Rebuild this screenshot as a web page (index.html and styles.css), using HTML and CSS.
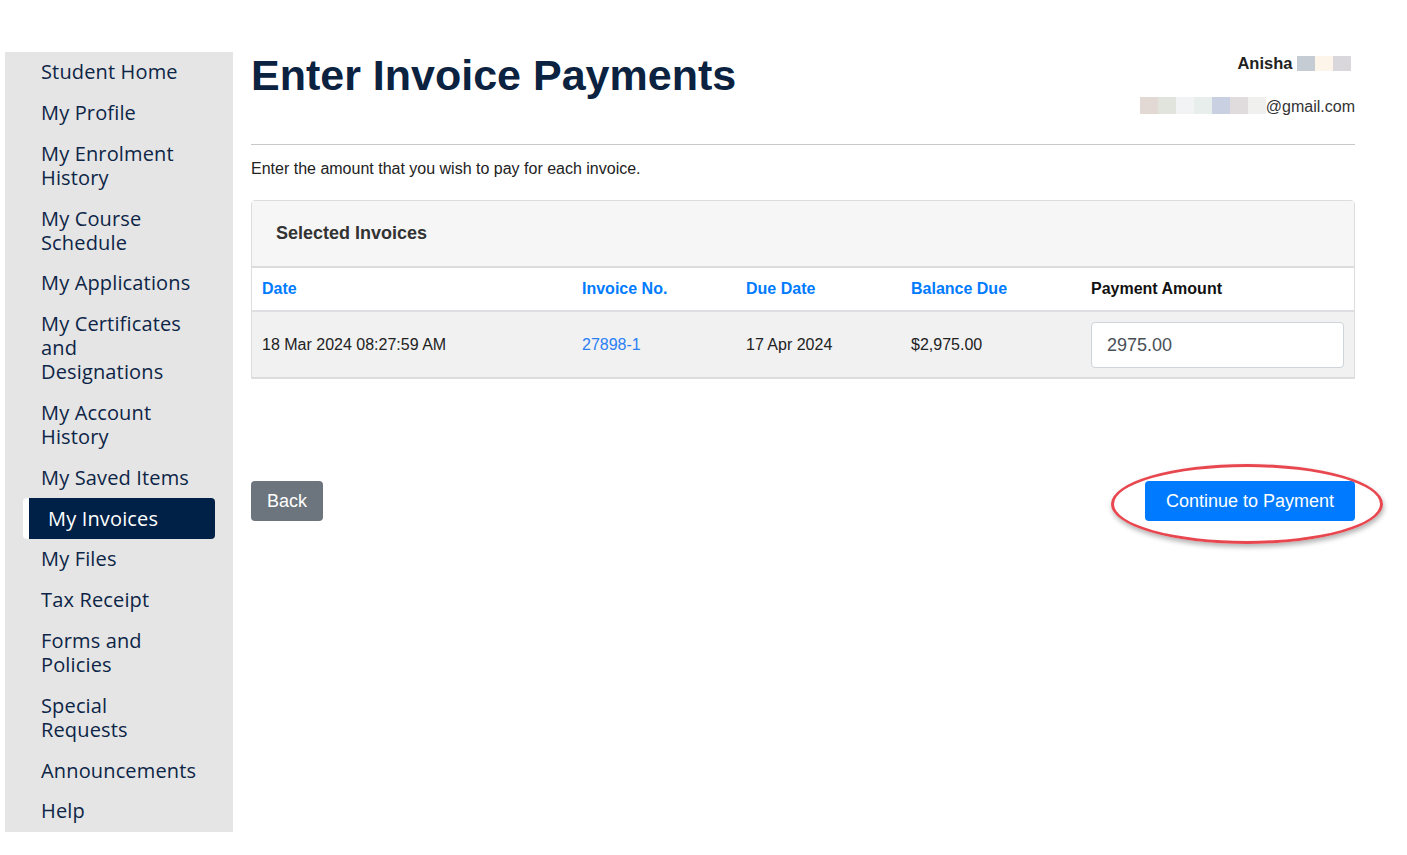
FILE: index.html
```html
<!DOCTYPE html>
<html lang="en">
<head>
<meta charset="UTF-8" />
<meta name="viewport" content="width=device-width, initial-scale=1" />
<title>Enter Invoice Payments</title>
<link rel="stylesheet" href="styles.css">
</head>
<body>
<div class="page">
  <nav class="sidebar">
    <a href="#">Student Home</a>
    <a href="#">My Profile</a>
    <a href="#">My Enrolment History</a>
    <a href="#">My Course Schedule</a>
    <a href="#">My Applications</a>
    <a href="#">My Certificates and Designations</a>
    <a href="#">My Account History</a>
    <a href="#">My Saved Items</a>
    <a href="#" class="active">My Invoices</a>
    <a href="#">My Files</a>
    <a href="#">Tax Receipt</a>
    <a href="#">Forms and Policies</a>
    <a href="#">Special Requests</a>
    <a href="#">Announcements</a>
    <a href="#">Help</a>
  </nav>

  <main class="content">
    <div class="header">
      <h1>Enter Invoice Payments</h1>
      <div class="user">
        <div class="user-name">Anisha <span class="blur"><i class="b1"></i><i class="b2"></i><i class="b3"></i></span></div>
        <div class="user-email"><span class="blur wide"><i class="b4"></i><i class="b5"></i><i class="b6"></i><i class="b7"></i><i class="b8"></i><i class="b9"></i><i class="b10"></i></span>@gmail.com</div>
      </div>
    </div>
    <hr>
    <p class="intro">Enter the amount that you wish to pay for each invoice.</p>

    <div class="card">
      <div class="card-header">Selected Invoices</div>
      <table class="invoices">
        <thead>
          <tr>
            <th class="c-date"><a href="#">Date</a></th>
            <th class="c-no"><a href="#">Invoice No.</a></th>
            <th class="c-due"><a href="#">Due Date</a></th>
            <th class="c-bal"><a href="#">Balance Due</a></th>
            <th class="c-pay">Payment Amount</th>
          </tr>
        </thead>
        <tbody>
          <tr>
            <td>18 Mar 2024 08:27:59 AM</td>
            <td><a href="#">27898-1</a></td>
            <td>17 Apr 2024</td>
            <td>$2,975.00</td>
            <td><input type="text" class="amount" value="2975.00"></td>
          </tr>
        </tbody>
      </table>
    </div>

    <div class="actions">
      <button class="btn btn-back">Back</button>
      <div class="continue-wrap">
        <button class="btn btn-primary">Continue to Payment</button>
        <span class="circle"></span>
      </div>
    </div>
  </main>
</div>
</body>
</html>
```

FILE: styles.css
```css
body { margin: 0; font-family: "Liberation Sans", Arial, sans-serif; color: #212529; background: #fff; }
.page { display: flex; padding: 52px 52px 0 5px; gap: 18px; }

.sidebar { width: 228px; flex-shrink: 0; background: #e5e5e5; font-family: "Open Sans", sans-serif; }
.sidebar a { display: block; margin: 0 18px; padding: 8.3px 18px 8.5px 18px; font-size: 20px; letter-spacing: 0.15px; line-height: 24px; color: #0d2547; text-decoration: none; }
.sidebar a.active { background: #002147; color: #fff; border-left: 6px solid #fff; padding-left: 19px; border-radius: 4px; }

.content { flex: 1; }
.header { display: flex; justify-content: space-between; align-items: flex-start; }
h1 { margin: 0; font-size: 43px; line-height: 46px; color: #0b2240; }
.user { text-align: right; font-size: 16px; padding-top: 2px; }
.user-name { font-weight: bold; color: #222; margin-right: 4px; line-height: 18px; font-size: 16.5px; }
.user-email { margin-top: 25px; color: #333; line-height: 18px; }
.blur { display: inline-flex; vertical-align: -2px; }
.blur i { display: block; width: 18px; height: 15px; }
.blur.wide i { height: 17px; }
.b1 { background: #c6ccd4; }
.b2 { background: #fdf4ea; }
.b3 { background: #d9d7dc; }
.b4 { background: #e2d9d4; }
.b5 { background: #e0e4dd; }
.b6 { background: #f1f3f5; }
.b7 { background: #e8eeec; }
.b8 { background: #c8d0e2; }
.b9 { background: #e0dcdd; }
.b10 { background: #f0f0ee; }

hr { border: 0; border-top: 1px solid #c8c8c8; margin: 28px 0 0; }
.intro { margin: 15px 0 22px; font-size: 16px; line-height: 18px; color: #222; }

.card { border: 1px solid #dcdcdc; border-radius: 4px 4px 0 0; }
.card-header { background: #f6f6f6; padding: 22px 24px; font-size: 18px; font-weight: bold; line-height: 21px; color: #333; border-bottom: 2px solid #dcdcdc; }
.invoices { width: 100%; border-collapse: collapse; font-size: 16px; }
.invoices th { text-align: left; padding: 11px 10px; line-height: 20px; color: #111; border-bottom: 2px solid #dedfe2; }
.invoices th a { color: #007bff; text-decoration: none; }
.invoices td { padding: 10px 10px 9px; background: #f1f1f1; color: #222; border-bottom: 1px solid #dcdcdc; }
.invoices td a { color: #2a7ff5; text-decoration: none; }
.c-date { width: 300px; }
.c-no { width: 144px; }
.c-due { width: 145px; }
.c-bal { width: 160px; }
.amount { box-sizing: border-box; width: 100%; height: 46px; padding: 0 15px; border: 1px solid #ced4da; border-radius: 4px; font-family: "Liberation Sans", Arial, sans-serif; font-size: 18px; color: #495057; background: #fff; }

.actions { display: flex; justify-content: space-between; align-items: center; margin-top: 102px; }
.btn { font-family: "Liberation Sans", Arial, sans-serif; font-size: 18px; line-height: 24px; padding: 7px 15px; border: 1px solid transparent; border-radius: 4px; color: #fff; cursor: pointer; }
.btn-back { background: #6c757d; }
.btn-primary { background: #007bff; padding: 7px 20px; }
.continue-wrap { position: relative; }
.circle { position: absolute; left: -34px; top: -17px; width: 266px; height: 74px; border: 3px solid #e8474f; border-radius: 50%; box-shadow: 1px 3px 5px rgba(0, 0, 0, 0.3); }
```
